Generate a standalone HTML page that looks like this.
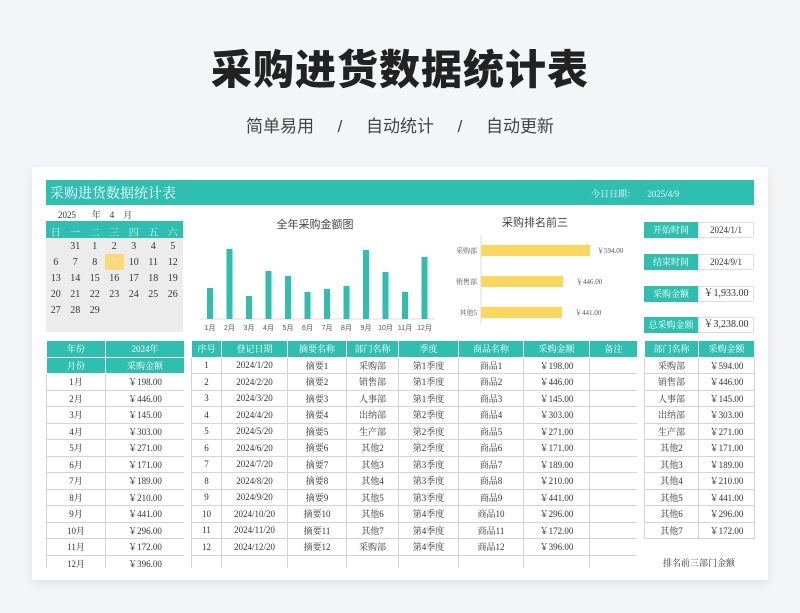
<!DOCTYPE html>
<html><head><meta charset="utf-8"><style>
*{margin:0;padding:0;box-sizing:border-box}
body{width:800px;height:613px;background:#f3f5f7;position:relative;overflow:hidden;font-family:"Liberation Serif","Noto Serif CJK SC",serif;color:#333}
.abs{position:absolute}
h1{position:absolute;left:0;width:800px;top:36px;text-align:center;font:900 41px "Liberation Sans","Noto Sans CJK SC",sans-serif;color:#222;letter-spacing:1px}
.sub{position:absolute;left:0;width:800px;top:112px;text-align:center;font:17px "Liberation Sans","Noto Sans CJK SC",sans-serif;color:#444;word-spacing:0}
.card{position:absolute;left:32px;top:167px;width:736px;height:413px;background:#fff;box-shadow:0 4px 10px rgba(0,0,0,.08)}
.bar{left:46px;top:180px;width:708px;height:25px;background:#2ebfb0;color:#fff}
table{border-collapse:collapse;position:absolute;font-size:9px;table-layout:fixed}
td{border:1px solid #d4d4d4;text-align:center;height:16.5px;padding:0;white-space:nowrap;overflow:hidden}
.h td{background:#2ebfb0;color:#fff;border-color:#fff}
.clip{position:absolute;overflow:hidden}
.cal{left:46px;top:221px;width:137px;height:111px;background:#ececec}
.cal div{position:absolute;width:19.5px;text-align:center;font-size:10px}
.kv{position:absolute;left:644px;width:110px;height:16px;font-size:9px}
.kv .k{position:absolute;left:0;width:54px;height:16px;background:#2ebfb0;color:#fff;text-align:center;line-height:16px}
.kv .v{position:absolute;left:54px;width:56px;height:16px;border:1px solid #ddd;text-align:center;line-height:14px}
</style></head><body>
<h1>采购进货数据统计表</h1>
<div class="sub">简单易用&nbsp;&nbsp;&nbsp;&nbsp;&nbsp;/&nbsp;&nbsp;&nbsp;&nbsp;&nbsp;自动统计&nbsp;&nbsp;&nbsp;&nbsp;&nbsp;/&nbsp;&nbsp;&nbsp;&nbsp;&nbsp;自动更新</div>
<div class="card"></div>
<div class="abs bar"><span class="abs" style="left:4px;top:3px;font-size:14px">采购进货数据统计表</span><span class="abs" style="left:545px;top:7px;font-size:9px;color:#e6fbf8">今日日期：&nbsp;&nbsp;&nbsp;&nbsp;&nbsp;2025/4/9</span></div>
<div class="abs" style="left:58px;top:208px;font-size:9px">2025&nbsp;&nbsp;&nbsp;&nbsp;&nbsp;&nbsp;&nbsp;年&nbsp;&nbsp;&nbsp;&nbsp;4&nbsp;&nbsp;&nbsp;&nbsp;月</div>
<div class="abs cal">
<div style="left:0;top:0;width:137px;height:17px;background:#2ebfb0"></div>
<div style="left:0;top:3px;color:#cef2ee">日</div><div style="left:19.5px;top:3px;color:#cef2ee">一</div><div style="left:39px;top:3px;color:#cef2ee">二</div><div style="left:58.5px;top:3px;color:#cef2ee">三</div><div style="left:78px;top:3px;color:#cef2ee">四</div><div style="left:97.5px;top:3px;color:#cef2ee">五</div><div style="left:117px;top:3px;color:#cef2ee">六</div>
<div style="left:19.5px;top:20px">31</div><div style="left:39px;top:20px">1</div><div style="left:58.5px;top:20px">2</div><div style="left:78px;top:20px">3</div><div style="left:97.5px;top:20px">4</div><div style="left:117px;top:20px">5</div>
<div style="left:0;top:36px">6</div><div style="left:19.5px;top:36px">7</div><div style="left:39px;top:36px">8</div><div style="left:58.5px;top:33px;height:16px;background:#fbd97a;color:#fbe9b5;line-height:16px">9</div><div style="left:78px;top:36px">10</div><div style="left:97.5px;top:36px">11</div><div style="left:117px;top:36px">12</div>
<div style="left:0;top:52px">13</div><div style="left:19.5px;top:52px">14</div><div style="left:39px;top:52px">15</div><div style="left:58.5px;top:52px">16</div><div style="left:78px;top:52px">17</div><div style="left:97.5px;top:52px">18</div><div style="left:117px;top:52px">19</div>
<div style="left:0;top:68px">20</div><div style="left:19.5px;top:68px">21</div><div style="left:39px;top:68px">22</div><div style="left:58.5px;top:68px">23</div><div style="left:78px;top:68px">24</div><div style="left:97.5px;top:68px">25</div><div style="left:117px;top:68px">26</div>
<div style="left:0;top:84px">27</div><div style="left:19.5px;top:84px">28</div><div style="left:39px;top:84px">29</div>
</div>
<div class="abs" style="left:195px;top:216px;width:240px;text-align:center;font:11px 'Liberation Sans','Noto Sans CJK SC',sans-serif;color:#444">全年采购金额图</div>
<svg class="abs" style="left:195px;top:230px" width="245" height="105">
<line x1="5" y1="89" x2="240" y2="89" stroke="#ddd"/>
<g fill="#2ebfb0">
<rect x="12" y="58" width="6" height="31"/><rect x="31.5" y="19" width="6" height="70"/><rect x="51" y="66" width="6" height="23"/><rect x="70.5" y="41" width="6" height="48"/><rect x="90" y="46" width="6" height="43"/><rect x="109.5" y="62" width="6" height="27"/><rect x="129" y="59" width="6" height="30"/><rect x="148.5" y="56" width="6" height="33"/><rect x="168" y="20" width="6" height="69"/><rect x="187.5" y="42" width="6" height="47"/><rect x="207" y="62" width="6" height="27"/><rect x="226.5" y="27" width="6" height="62"/>
</g>
<g font-size="7" fill="#555" text-anchor="middle" font-family="Liberation Sans,Noto Sans CJK SC,sans-serif">
<text x="15" y="100">1月</text><text x="34.5" y="100">2月</text><text x="54" y="100">3月</text><text x="73.5" y="100">4月</text><text x="93" y="100">5月</text><text x="112.5" y="100">6月</text><text x="132" y="100">7月</text><text x="151.5" y="100">8月</text><text x="171" y="100">9月</text><text x="190.5" y="100">10月</text><text x="210" y="100">11月</text><text x="229.5" y="100">12月</text>
</g></svg>
<div class="abs" style="left:450px;top:214px;width:170px;text-align:center;font:11px 'Liberation Sans','Noto Sans CJK SC',sans-serif;color:#444">采购排名前三</div>
<svg class="abs" style="left:440px;top:230px" width="200" height="100">
<line x1="41" y1="5" x2="41" y2="95" stroke="#ddd"/>
<g fill="#fbd75f"><rect x="41" y="15" width="109" height="11"/><rect x="41" y="46" width="82" height="11"/><rect x="41" y="77" width="81" height="11"/></g>
<g font-size="7" fill="#555" font-family="Liberation Serif,Noto Serif CJK SC,serif">
<text x="37" y="23" text-anchor="end">采购部</text><text x="37" y="54" text-anchor="end">销售部</text><text x="37" y="85" text-anchor="end">其他5</text>
<text x="157" y="23">￥594.00</text><text x="136" y="54">￥446.00</text><text x="135" y="85">￥441.00</text></g></svg>
<div class="kv" style="top:222px"><div class="k">开始时间</div><div class="v">2024/1/1</div></div>
<div class="kv" style="top:254px"><div class="k">结束时间</div><div class="v">2024/9/1</div></div>
<div class="kv" style="top:286px"><div class="k">采购金额</div><div class="v" style="font-size:10px">￥1,933.00</div></div>
<div class="kv" style="top:317px"><div class="k">总采购金额</div><div class="v" style="font-size:10px">￥3,238.00</div></div>

<div class="clip" style="left:46px;top:340px;width:138px;height:228px"><table style="left:0;top:0;width:138px">
<col style="width:59px"><col style="width:79px">
<tr class="h"><td>年份</td><td>2024年</td></tr><tr class="h"><td>月份</td><td>采购金额</td></tr>
<tr><td>1月</td><td>￥198.00</td></tr><tr><td>2月</td><td>￥446.00</td></tr><tr><td>3月</td><td>￥145.00</td></tr><tr><td>4月</td><td>￥303.00</td></tr><tr><td>5月</td><td>￥271.00</td></tr><tr><td>6月</td><td>￥171.00</td></tr><tr><td>7月</td><td>￥189.00</td></tr><tr><td>8月</td><td>￥210.00</td></tr><tr><td>9月</td><td>￥441.00</td></tr><tr><td>10月</td><td>￥296.00</td></tr><tr><td>11月</td><td>￥172.00</td></tr><tr><td>12月</td><td>￥396.00</td></tr>
</table></div>

<div class="clip" style="left:191px;top:340px;width:446px;height:228px"><table style="left:0;top:0;width:446px">
<col style="width:30px"><col style="width:66px"><col style="width:59px"><col style="width:52px"><col style="width:60px"><col style="width:65px"><col style="width:66px"><col style="width:48px">
<tr class="h"><td>序号</td><td>登记日期</td><td>摘要名称</td><td>部门名称</td><td>季度</td><td>商品名称</td><td>采购金额</td><td>备注</td></tr>
<tr><td>1</td><td>2024/1/20</td><td>摘要1</td><td>采购部</td><td>第1季度</td><td>商品1</td><td>￥198.00</td><td></td></tr>
<tr><td>2</td><td>2024/2/20</td><td>摘要2</td><td>销售部</td><td>第1季度</td><td>商品2</td><td>￥446.00</td><td></td></tr>
<tr><td>3</td><td>2024/3/20</td><td>摘要3</td><td>人事部</td><td>第1季度</td><td>商品3</td><td>￥145.00</td><td></td></tr>
<tr><td>4</td><td>2024/4/20</td><td>摘要4</td><td>出纳部</td><td>第2季度</td><td>商品4</td><td>￥303.00</td><td></td></tr>
<tr><td>5</td><td>2024/5/20</td><td>摘要5</td><td>生产部</td><td>第2季度</td><td>商品5</td><td>￥271.00</td><td></td></tr>
<tr><td>6</td><td>2024/6/20</td><td>摘要6</td><td>其他2</td><td>第2季度</td><td>商品6</td><td>￥171.00</td><td></td></tr>
<tr><td>7</td><td>2024/7/20</td><td>摘要7</td><td>其他3</td><td>第3季度</td><td>商品7</td><td>￥189.00</td><td></td></tr>
<tr><td>8</td><td>2024/8/20</td><td>摘要8</td><td>其他4</td><td>第3季度</td><td>商品8</td><td>￥210.00</td><td></td></tr>
<tr><td>9</td><td>2024/9/20</td><td>摘要9</td><td>其他5</td><td>第3季度</td><td>商品9</td><td>￥441.00</td><td></td></tr>
<tr><td>10</td><td>2024/10/20</td><td>摘要10</td><td>其他6</td><td>第4季度</td><td>商品10</td><td>￥296.00</td><td></td></tr>
<tr><td>11</td><td>2024/11/20</td><td>摘要11</td><td>其他7</td><td>第4季度</td><td>商品11</td><td>￥172.00</td><td></td></tr>
<tr><td>12</td><td>2024/12/20</td><td>摘要12</td><td>采购部</td><td>第4季度</td><td>商品12</td><td>￥396.00</td><td></td></tr>
<tr><td></td><td></td><td></td><td></td><td></td><td></td><td></td><td></td></tr>
</table></div>

<table style="left:644px;top:340px;width:110px">
<col style="width:54px"><col style="width:56px">
<tr class="h"><td>部门名称</td><td>采购金额</td></tr>
<tr><td>采购部</td><td>￥594.00</td></tr><tr><td>销售部</td><td>￥446.00</td></tr><tr><td>人事部</td><td>￥145.00</td></tr><tr><td>出纳部</td><td>￥303.00</td></tr><tr><td>生产部</td><td>￥271.00</td></tr><tr><td>其他2</td><td>￥171.00</td></tr><tr><td>其他3</td><td>￥189.00</td></tr><tr><td>其他4</td><td>￥210.00</td></tr><tr><td>其他5</td><td>￥441.00</td></tr><tr><td>其他6</td><td>￥296.00</td></tr><tr><td>其他7</td><td>￥172.00</td></tr>
</table>
<div class="abs" style="left:644px;top:556px;width:110px;text-align:center;font-size:9px">排名前三部门金额</div>
</body></html>
